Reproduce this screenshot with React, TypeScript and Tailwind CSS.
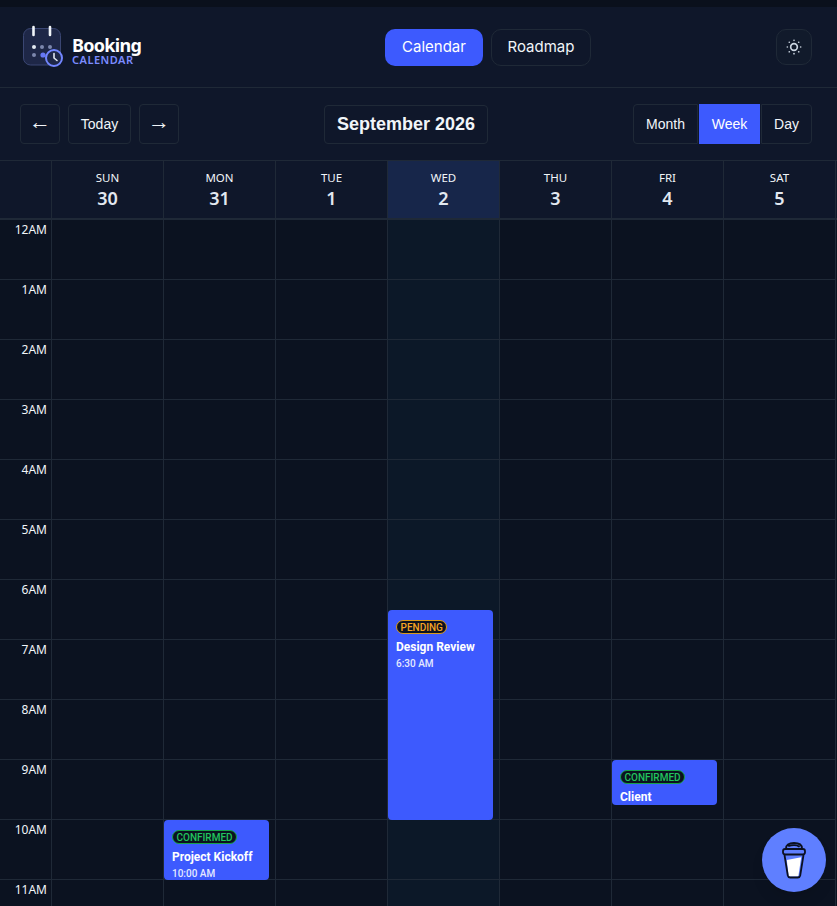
import { SunDim } from 'lucide-react';

const days = [
  { name: 'SUN', num: '30' },
  { name: 'MON', num: '31' },
  { name: 'TUE', num: '1' },
  { name: 'WED', num: '2', today: true },
  { name: 'THU', num: '3' },
  { name: 'FRI', num: '4' },
  { name: 'SAT', num: '5' },
];

const hours = ['12AM', '1AM', '2AM', '3AM', '4AM', '5AM', '6AM', '7AM', '8AM', '9AM', '10AM', '11AM'];

function Logo() {
  return (
    <svg width="44" height="44" viewBox="0 0 44 44" fill="none">
      <rect x="1.500" y="3.500" width="37" height="36.500" rx="7" fill="#1e2747" stroke="#3a4672" strokeWidth="1" />
      <path d="M11.500 2v8M28 2v8" stroke="#f1f5f9" strokeWidth="2.600" strokeLinecap="round" />
      <circle cx="12" cy="22" r="2" fill="#e2e8f0" />
      <circle cx="20" cy="22" r="2" fill="#7c87ad" />
      <circle cx="28" cy="22" r="2" fill="#7c87ad" />
      <circle cx="12" cy="30" r="2" fill="#7c87ad" />
      <circle cx="21" cy="30" r="2.600" fill="#6678f5" />
      <circle cx="32" cy="33" r="8" fill="#1e2747" stroke="#7286ff" strokeWidth="2" />
      <path d="M32 28.500V33l3 2.500" stroke="#e2e8f0" strokeWidth="1.600" strokeLinecap="round" strokeLinejoin="round" />
    </svg>
  );
}

function Cup() {
  return (
    <svg width="28" height="38" viewBox="0 0 28 38" fill="none">
      <path d="M4.500 14l3.300 20.500a2.500 2.500 0 0 0 2.400 2h7.600a2.500 2.500 0 0 0 2.400-2L23.500 14z" fill="#5f7fff" />
      <path d="M6.800 19l14.400-2.800-2.700 18a1.600 1.600 0 0 1-1.600 1.400h-6.800a1.600 1.600 0 0 1-1.600-1.400z" fill="#ffffff" />
      <path d="M4.500 14l3.300 20.500a2.500 2.500 0 0 0 2.400 2h7.600a2.500 2.500 0 0 0 2.400-2L23.500 14" stroke="#0b1020" strokeWidth="1.800" strokeLinejoin="round" />
      <rect x="3" y="8" width="22" height="5.500" rx="2.200" fill="#5f7fff" stroke="#0b1020" strokeWidth="1.800" />
      <path d="M6 7.500C6 4 8.500 2 14 2s8 2 8 5.500M9 5c3-1.200 8-1.200 10 .5" stroke="#0b1020" strokeWidth="1.800" strokeLinecap="round" />
    </svg>
  );
}

function Badge({ label, tone }: { label: string; tone: 'green' | 'amber' }) {
  return (
    <span
      className={`flex h-[14px] w-fit items-center rounded-full border px-[3.5px] text-[10px] font-medium bg-[#0b1220] ${
        tone === 'green' ? 'border-[#16a34a] text-[#22c55e]' : 'border-[#d99a1c] text-[#f5a524]'
      }`}
    >
      {label}
    </span>
  );
}

function EventCard({ top, height, left, label, tone, title, time }: {
  top: string;
  height: string;
  left: string;
  label: string;
  tone: 'green' | 'amber';
  title: string;
  time?: string;
}) {
  return (
    <div className={`absolute ${top} ${height} ${left} w-[105px] overflow-hidden rounded-[4px] bg-[#3d5afe] px-2 pt-[10px] font-['Roboto',sans-serif] text-white`}>
      <Badge label={label} tone={tone} />
      <div className="mt-[5px] text-[12px] leading-[17px] font-bold whitespace-nowrap">{title}</div>
      {time && <div className="text-[10px] leading-[15px] font-medium text-[#e4e9ff]">{time}</div>}
    </div>
  );
}

export default function App() {
  return (
    <div className="relative h-screen w-full overflow-hidden bg-[#0b1220] font-['Noto_Sans',sans-serif] text-[#f1f5f9]">
      <div className="h-[7px] bg-[#0a101c]" />

      {/* Header */}
      <header className="flex h-[81px] items-center justify-between border-b border-[#1f2937] bg-[#0f172a] pr-[25px] pl-[22px]">
        <div className="flex w-[178px] items-center gap-[6px]">
          <Logo />
          <div className="pt-[9px]">
            <div className="text-[18px] leading-[16px] font-bold tracking-[-0.7px] text-white">Booking</div>
            <div className="mt-[1px] text-[11px] leading-[12px] font-semibold tracking-[0.5px] text-[#7b8cff]">CALENDAR</div>
          </div>
        </div>
        <nav className="mt-[1px] flex gap-2 font-['Inter',sans-serif] text-[15px]">
          <button className="h-[37px] w-[98px] rounded-[10px] bg-[#3d5afe] text-white">Calendar</button>
          <button className="h-[37px] w-[100px] rounded-[10px] border border-[#1f2937] text-[#f1f5f9]">Roadmap</button>
        </nav>
        <button className="flex h-[36px] w-[36px] items-center justify-center rounded-[10px] border border-[#1f2937] bg-[#111a2b]">
          <SunDim size={20} className="text-[#cbd5e1]" />
        </button>
      </header>

      {/* Toolbar */}
      <div className="flex h-[73px] items-center justify-between border-b border-[#1f2937] bg-[#0f172a] pr-[25px] pl-[20px] font-['Liberation_Sans',sans-serif] text-[14px]">
        <div className="flex gap-2">
          <button className="h-[40px] w-[40px] rounded-[4px] border border-[#1f2937] pb-[4px] text-[22px] leading-none">←</button>
          <button className="h-[40px] w-[63px] rounded-[4px] border border-[#1f2937]">Today</button>
          <button className="h-[40px] w-[40px] rounded-[4px] border border-[#1f2937] pb-[4px] text-[22px] leading-none">→</button>
        </div>
        <div className="flex h-[39px] w-[164px] items-center justify-center rounded-[4px] border border-[#1f2937] text-[18px] font-bold text-[#f1f5f9]">
          September 2026
        </div>
        <div className="flex gap-px">
          <button className="h-[40px] w-[65px] rounded-l-[4px] border border-[#1f2937]">Month</button>
          <button className="h-[40px] w-[61px] bg-[#3d5afe] text-white">Week</button>
          <button className="h-[40px] w-[51px] rounded-r-[4px] border border-[#1f2937]">Day</button>
        </div>
      </div>

      {/* Day headers */}
      <div className="grid h-[59px] grid-cols-[52px_repeat(7,112px)] border-b-2 border-[#1f2937] bg-[#0f172a]">
        <div className="border-r border-[#1f2937]" />
        {days.map((d) => (
          <div
            key={d.name}
            className={`flex flex-col items-center border-r border-[#1f2937] pt-[9px] ${d.today ? 'bg-[#17264a]' : ''}`}
          >
            <span className="text-[11.5px] leading-[16px]">{d.name}</span>
            <span className="text-[18px] leading-[25px] font-semibold text-[#e2e8f0]">{d.num}</span>
          </div>
        ))}
      </div>

      {/* Week grid */}
      <div className="relative grid grid-cols-[52px_repeat(7,112px)]">
        {hours.map((h) => (
          <div key={h} className="contents">
            <div className="h-[60px] border-r border-b border-[#1f2937] pt-[2px] pr-[4px] text-right text-[12px] leading-[16px] text-[#f1f5f9]">
              {h}
            </div>
            {days.map((d) => (
              <div key={d.name} className={`h-[60px] border-r border-b border-[#1f2937] ${d.today ? 'bg-[#0c1828]' : ''}`} />
            ))}
          </div>
        ))}

        <EventCard top="top-[390px]" height="h-[210px]" left="left-[388px]" label="PENDING" tone="amber" title="Design Review" time="6:30 AM" />
        <EventCard top="top-[540px]" height="h-[45px]" left="left-[612px]" label="CONFIRMED" tone="green" title="Client" />
        <EventCard top="top-[600px]" height="h-[60px]" left="left-[164px]" label="CONFIRMED" tone="green" title="Project Kickoff" time="10:00 AM" />
      </div>

      <button className="fixed right-[11px] bottom-[14px] flex h-[64px] w-[64px] items-center justify-center rounded-full bg-[#5f7fff] shadow-lg">
        <Cup />
      </button>
    </div>
  );
}
